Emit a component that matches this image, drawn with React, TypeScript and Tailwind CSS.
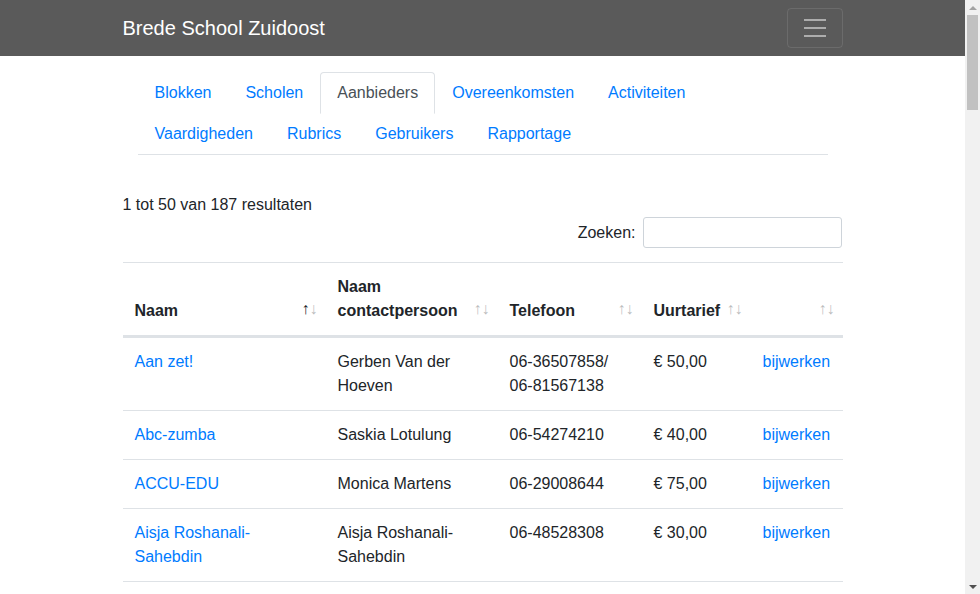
import React from 'react';

const tabsRow = ['Blokken', 'Scholen', 'Aanbieders', 'Overeenkomsten', 'Activiteiten', 'Vaardigheden', 'Rubrics', 'Gebruikers', 'Rapportage'];

type Row = { naam: string; contact: string; tel: React.ReactNode; tarief: string };

const rows: Row[] = [
  { naam: 'Aan zet!', contact: 'Gerben Van der Hoeven', tel: <>06-36507858/<br />06-81567138</>, tarief: '€ 50,00' },
  { naam: 'Abc-zumba', contact: 'Saskia Lotulung', tel: '06-54274210', tarief: '€ 40,00' },
  { naam: 'ACCU-EDU', contact: 'Monica Martens', tel: '06-29008644', tarief: '€ 75,00' },
  { naam: 'Aisja Roshanali-Sahebdin', contact: 'Aisja Roshanali-Sahebdin', tel: '06-48528308', tarief: '€ 30,00' },
];

const SortArrows = ({ active }: { active?: boolean }) => (
  <>
    <span className={`absolute bottom-[14px] right-[16px] leading-6 font-normal ${active ? 'opacity-100' : 'opacity-30'}`}>↑</span>
    <span className="absolute bottom-[14px] right-[8px] leading-6 font-normal opacity-30">↓</span>
  </>
);

const headers = [
  { label: 'Naam', w: 'w-[203px]', active: true },
  { label: 'Naam contactpersoon', w: 'w-[172px]' },
  { label: 'Telefoon', w: 'w-[144px]' },
  { label: 'Uurtarief', w: 'w-[109px]' },
  { label: '', w: 'w-[92px]' },
];

// browser scrollbar as seen in the screenshot
const Scrollbar = () => (
  <div className="flex w-[15px] shrink-0 flex-col items-center bg-[#f1f1f1]">
    <div className="flex h-[15px] items-center justify-center">
      <div className="h-0 w-0 border-x-[4px] border-b-[4px] border-x-transparent border-b-[#a3a3a3]" />
    </div>
    <div className="h-[95px] w-[11px] bg-[#c1c1c1]" />
    <div className="flex-1" />
    <div className="flex h-[15px] items-center justify-center">
      <div className="h-0 w-0 border-x-[4px] border-t-[4px] border-x-transparent border-t-[#505050]" />
    </div>
  </div>
);

export default function App() {
  return (
    <div className="flex h-screen overflow-hidden bg-white font-['Liberation_Sans',Arial,sans-serif] text-base leading-6 text-[#212529]">
      <div className="min-w-0 flex-1 overflow-hidden">
        {/* Navbar */}
        <nav className="bg-[#5a5a5a] py-2">
          <div className="mx-auto flex max-w-[750px] items-center justify-between px-[15px]">
            <span className="py-[5px] text-xl leading-[30px] text-white">Brede School Zuidoost</span>
            <button className="flex h-10 w-14 items-center justify-center rounded border border-white/10">
              <svg width="30" height="30" viewBox="0 0 30 30">
                <path d="M4 7h22M4 15h22M4 23h22" stroke="rgba(255,255,255,0.5)" strokeWidth="2" />
              </svg>
            </button>
          </div>
        </nav>

        <div className="mx-auto max-w-[750px] px-[15px]">
          {/* Tabs */}
          <ul className="mx-[15px] mt-4 flex flex-wrap border-b border-[#dee2e6]">
            {tabsRow.map((t) => (
              <li key={t} className="-mb-px">
                <span
                  className={
                    t === 'Aanbieders'
                      ? 'block rounded-t border border-[#dee2e6] border-b-white bg-white px-4 py-2 text-[#495057]'
                      : 'block rounded-t border border-transparent px-4 py-2 text-[#007bff]'
                  }
                >
                  {t}
                </span>
              </li>
            ))}
          </ul>

          <div className="mt-[38px]">1 tot 50 van 187 resultaten</div>

          <div className="flex items-center justify-end">
            <label className="mr-px flex items-center">
              Zoeken:
              <input type="search" className="ml-[7px] h-[31px] w-[199px] rounded-[3px] border border-[#ced4da] bg-white px-2 text-sm outline-none" />
            </label>
          </div>

          {/* Table */}
          <table className="mt-[14px] w-full table-fixed border-separate border-spacing-0">
            <thead>
              <tr>
                {headers.map((h, i) => (
                  <th
                    key={i}
                    className={`${h.w} relative border-t border-b-2 border-[#dee2e6] py-3 pl-3 pr-[30px] text-left align-bottom font-bold`}
                  >
                    {h.label}
                    <SortArrows active={h.active} />
                  </th>
                ))}
              </tr>
            </thead>
            <tbody>
              {rows.map((r) => (
                <tr key={r.naam}>
                  <td className="border-t border-[#dee2e6] p-3 align-top text-[#007bff]">{r.naam}</td>
                  <td className="border-t border-[#dee2e6] p-3 align-top">{r.contact}</td>
                  <td className="border-t border-[#dee2e6] p-3 align-top">{r.tel}</td>
                  <td className="border-t border-[#dee2e6] p-3 align-top">{r.tarief}</td>
                  <td className="border-t border-[#dee2e6] p-3 align-top text-[#007bff]">bijwerken</td>
                </tr>
              ))}
              <tr>
                <td colSpan={5} className="border-t border-[#dee2e6] p-3">&nbsp;</td>
              </tr>
            </tbody>
          </table>
        </div>
      </div>
      <Scrollbar />
    </div>
  );
}
